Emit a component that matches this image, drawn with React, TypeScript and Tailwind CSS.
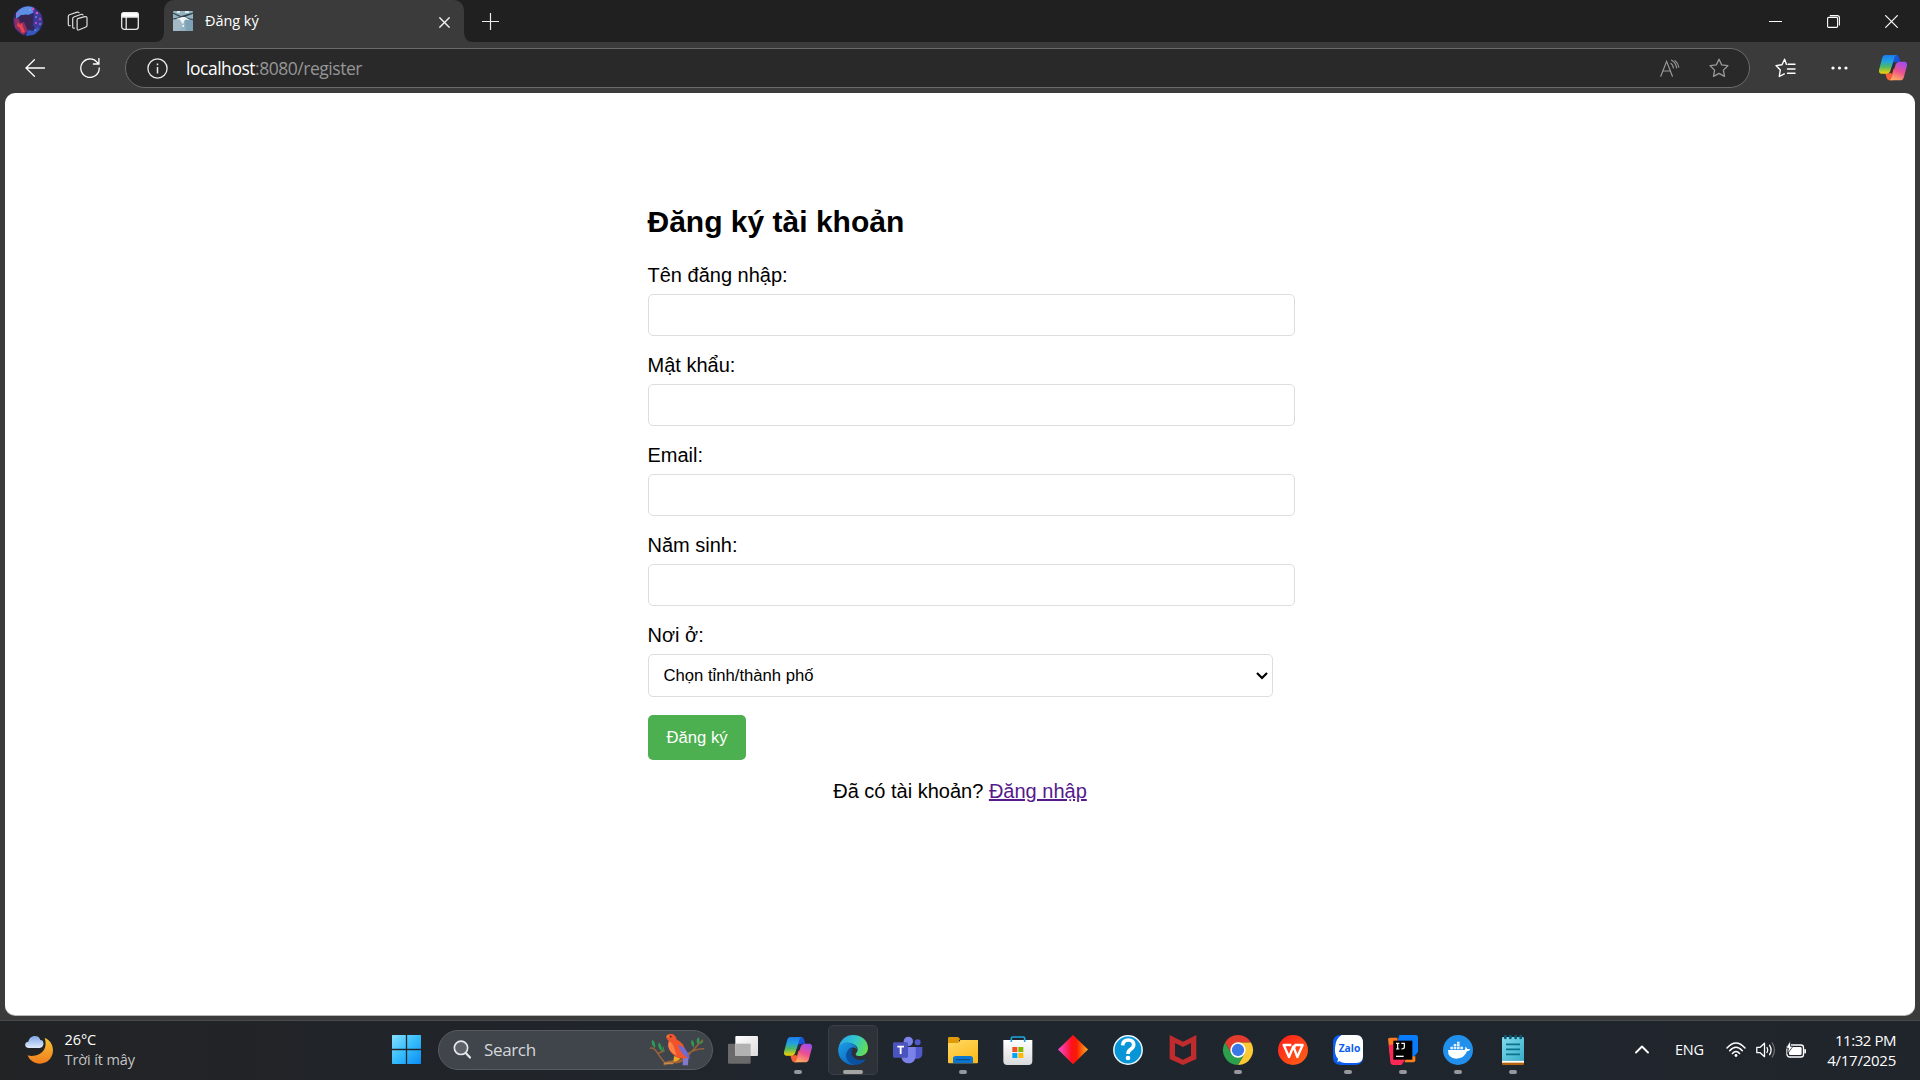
import type { ReactNode } from "react";

const UI = "font-['Open_Sans','Noto_Sans',sans-serif]";

function Ribbon({ id }: { id: string }) {
  return (
    <>
      <defs>
        <linearGradient id={id + "a"} x1="0" y1="0" x2="0" y2="1">
          <stop offset="0" stopColor="#1b7df0" />
          <stop offset="0.35" stopColor="#22a3dc" />
          <stop offset="0.62" stopColor="#4cb86a" />
          <stop offset="1" stopColor="#f6d000" />
        </linearGradient>
        <linearGradient id={id + "b"} x1="0.7" y1="0" x2="0.3" y2="1">
          <stop offset="0" stopColor="#a04cf0" />
          <stop offset="0.5" stopColor="#ee5090" />
          <stop offset="1" stopColor="#ffb35c" />
        </linearGradient>
        <linearGradient id={id + "c"} x1="0" y1="0" x2="1" y2="1">
          <stop offset="0" stopColor="#0f5fd8" />
          <stop offset="1" stopColor="#2445d8" />
        </linearGradient>
      </defs>
      <path d="M44 6h10c6 0 8 4 10 10l3 10h-8c-8 0-11 4-13 11l-10 8z" fill={`url(#${id}c)`} />
      <path d="M45 82H35c-6 0-8-4-10-10l-3-11h8c8 0 11-4 13-11l10-6z" fill="#f4603a" />
      <path d="M24 6h34c-6 1-8 5-10 11L38 50c-2 8-6 12-14 12H13C4 62 1 56 4 47l8-30C14 9 17 6 24 6z" fill={`url(#${id}a)`} />
      <path d="M66 82H32c6-1 8-5 10-11l10-33c2-8 6-12 14-12h11c9 0 12 6 9 15l-8 30c-2 8-5 11-12 11z" fill={`url(#${id}b)`} />
      <path d="M46 28h6l-10 34-5-2z" fill="#2b2c33" />
    </>
  );
}

function TaskIcon({ children, running, active }: { children: ReactNode; running?: boolean; active?: boolean }) {
  return (
    <div className={active ? "flex h-[50px] w-[50px] flex-col items-center rounded-[5px] border border-[#3a3f46] bg-[#2d3239]" : "flex h-[50px] w-[50px] flex-col items-center border border-transparent"}>
      <svg viewBox="0 0 90 90" className="mt-[9px] h-[30px] w-[30px] shrink-0 overflow-visible">{children}</svg>
      {running && <span className={active ? "mt-[5px] h-1 w-5 rounded-full bg-[#a5a5a3]" : "mt-[5px] h-1 w-2 rounded-full bg-[#96989b]"} />}
    </div>
  );
}

function TabStrip() {
  return (
    <div className="flex h-[42px] items-center bg-[#202020]">
      <svg viewBox="0 0 30 30" className="ml-[13px] h-[30px] w-[30px]">
        <defs>
          <clipPath id="avatar"><circle cx="15" cy="15" r="15" /></clipPath>
        </defs>
        <g clipPath="url(#avatar)">
          <rect width="30" height="30" fill="#2b2a6c" />
          <path d="M3 7Q10-2 20 1l2 5-7 3-7 0-5 4z" fill="#5b8fe6" />
          <path d="M19 1l9 7 2 10-6 7-4-6 1-9z" fill="#43399c" />
          <path d="M7 10q8-4 12 2 2 8-3 14-10-2-9-16z" fill="#382650" />
          <path d="M1 12l5 1 1 4 4-1 2 5 2 4-5 4-8-7z" fill="#8d2f66" />
          <path d="M5 16l2 3 2-2 1 4 2 5-3 1-2-5-3-2z" fill="#ec4350" />
          <path d="M15 24l6 1 3-4 3 2-6 6-8 1z" fill="#3558bd" />
          <g fill="#d255b8"><circle cx="20" cy="3" r="1.500" /><circle cx="24" cy="7" r="1.300" /><circle cx="27" cy="13" r="1" /><circle cx="5" cy="8" r="1" /><circle cx="23" cy="17" r="1" /></g>
          <g fill="#8fb6f5"><circle cx="17" cy="4" r=".8" /><circle cx="27" cy="18" r=".8" /><circle cx="22" cy="24" r=".8" /><circle cx="23" cy="11" r=".8" /></g>
        </g>
      </svg>
      <svg viewBox="0 0 21 20" className="ml-6 h-5 w-[21px]" fill="none" stroke="#dedede" strokeWidth="1.2" strokeLinejoin="round" strokeLinecap="round">
        <path d="M10.600 7.600l7.200-2q2.200-.4 2.200 1.600v7.300q0 1.100-1.100 1.500l-6.600 2.800q-2.200.7-2.200-1.200V9q0-1 .5-1.400z" />
        <path d="M7.400 17.200q-1.700.4-1.700-1.400V7.700q0-1.300 1.100-1.700l7.600-2.700q1.200-.2 1.600.7" />
        <path d="M3.200 14.700q-1.900.4-1.900-1.400V5.400q0-1.300 1.100-1.700l7.800-2.600q1.300-.3 1.800.6" />
      </svg>
      <svg viewBox="0 0 18 18" className="ml-[33px] h-[18px] w-[18px]" fill="none" stroke="#e8e8e8" strokeWidth="1.3">
        <rect x=".7" y=".7" width="16.600" height="16.600" rx="2.600" />
        <path d="M.7 5V3Q.7.7 3 .7h12q2.300 0 2.300 2.300v2z" fill="#fff" />
        <path d="M5.200 5v12" />
      </svg>
      <div className="flex h-[42px] w-[25px] items-end justify-end">
        <svg viewBox="0 0 10 10" className="h-[10px] w-[10px]"><path d="M10 0v10H0Q10 10 10 0z" fill="#3b3b3b" /></svg>
      </div>
      <div className="flex h-[42px] w-[300px] items-center rounded-t-[10px] bg-[#3b3b3b]">
        <svg viewBox="0 0 20 20" className="ml-[9px] h-5 w-5">
          <rect width="20" height="20" rx="1" fill="#93b3c3" />
          <path d="M0 8l8-2 2 8-4 6H0z" fill="#a3bac6" />
          <path d="M12 9l8-2v13h-7z" fill="#7fa3b6" />
          <path d="M0 1.500l8 3.500 12-3.500v1.200L12 6l8 2.200v1L11 7 0 8.500v-1L7 6 0 2.800z" fill="#33454e" />
          <path d="M3 8l6-2 3 0 5 3-5-.5-1 2-1 3-2-3-1-2zM9.500 14h1.500v2H9.500z" fill="#eef5f8" />
          <path d="M4 0h3v2H4zM12 0h4v2h-4z" fill="#dbe7ec" />
        </svg>
        <span className="ml-3 -mt-[1px] text-[14.500px] leading-5 tracking-[-0.050px] text-white">Đăng ký</span>
        <svg viewBox="0 0 11 11" className="ml-auto mr-[14px] mt-[2px] h-[11px] w-[11px]" stroke="#f2f2f2" strokeWidth="1.4"><path d="M.4.4l10.200 10.200M10.600.4L.4 10.600" /></svg>
      </div>
      <div className="flex h-[42px] w-[10px] items-end">
        <svg viewBox="0 0 10 10" className="h-[10px] w-[10px]"><path d="M0 0v10h10Q0 10 0 0z" fill="#3b3b3b" /></svg>
      </div>
      <svg viewBox="0 0 17 17" className="ml-2 h-[17px] w-[17px]" stroke="#ececec" strokeWidth="1.2"><path d="M8.500 0v17M0 8.500h17" /></svg>
      <div className="ml-auto mr-[22px] flex items-center">
        <span className="h-px w-[13px] bg-white" />
        <svg viewBox="0 0 13 13" className="ml-[45px] h-[13px] w-[13px]" fill="none" stroke="#fff" strokeWidth="1.1">
          <rect x=".6" y="2.400" width="10" height="10" rx="1.200" />
          <path d="M2.800.6h7.400q2.200 0 2.200 2.200v7.600" />
        </svg>
        <svg viewBox="0 0 13 13" className="ml-[45px] h-[13px] w-[13px]" stroke="#fff" strokeWidth="1.2"><path d="M.3.3l12.400 12.400M12.700.3L.3 12.700" /></svg>
      </div>
    </div>
  );
}

const STAR = "M10 1.2l2.7 5.7 6.2.8-4.5 4.4 1.1 6.3L10 15.4l-5.5 3 1.1-6.3L1.1 7.7l6.2-.8z";

function Toolbar() {
  return (
    <div className="flex h-[51px] items-center bg-[#3b3b3b]">
      <svg viewBox="0 0 20 18" className="ml-[25px] h-[18px] w-5" fill="none" stroke="#fff" strokeWidth="1.3" strokeLinecap="round"><path d="M9.400.8L1 9l8.400 8.200M1 9h18.500" /></svg>
      <svg viewBox="0 0 20 20" className="ml-[35px] h-5 w-5" fill="none" stroke="#fff" strokeWidth="1.3" strokeLinecap="round"><path d="M19.200 10A9.200 9.200 0 1 1 17 4.200L18.800 6M18.900.6V6H13.400" /></svg>
      <div className="ml-[25px] mt-[1px] flex h-10 w-[1625px] items-center rounded-full border border-[#6b6b6b] bg-[#292929]">
        <svg viewBox="0 0 21 21" className="ml-[21px] h-[21px] w-[21px]" fill="none" stroke="#ececec" strokeWidth="1.3"><circle cx="10.500" cy="10.500" r="9.600" /><path d="M10.500 9v6.500M10.500 5.500v1.800" strokeWidth="1.5" /></svg>
        <p className="ml-[18px] -mt-[1px] text-[17.500px] leading-6 tracking-[-0.470px] text-[#969696]"><span className="text-white">localhost</span>:8080/register</p>
        <svg viewBox="0 0 20 18" className="ml-auto h-[18px] w-5" fill="none" stroke="#999" strokeWidth="1.2" strokeLinecap="round">
          <path d="M.8 17.200L6.600 2.400l5.800 14.800M2.800 12h7.600M11 4.400q2 1.400 2.400 4.400M11.600 1.200q4.200 2.300 5 7.600M15 1.600q3 2.400 3.800 6.600" />
        </svg>
        <svg viewBox="0 0 20 20" className="ml-[29px] mr-[20px] h-5 w-5" fill="none" stroke="#999" strokeWidth="1.3" strokeLinejoin="round"><path d={STAR} /></svg>
      </div>
      <svg viewBox="0 0 21 20" className="ml-[25px] h-5 w-[21px]" fill="none" stroke="#fff" strokeWidth="1.4" strokeLinejoin="round" strokeLinecap="round"><path d="M11.400 6.300L9.600 1.200 7 6.700l-6 .9 4.300 4.300-1 6.600 5-2.600M13 6.300h7M12.500 11h7.500M12.500 15.200h7.500" /></svg>
      <svg viewBox="0 0 17 4" className="ml-[35px] h-1 w-[17px]" fill="#fff"><circle cx="2" cy="2" r="1.600" /><circle cx="8.500" cy="2" r="1.600" /><circle cx="15" cy="2" r="1.600" /></svg>
      <svg viewBox="0 0 90 90" className="ml-[30px] h-[30px] w-[30px]"><Ribbon id="top" /></svg>
    </div>
  );
}

function RegisterPage() {
  return (
    <main className="mx-[5px] h-[922px] rounded-[10px] bg-white pt-[111px] font-['Liberation_Sans',Arial,sans-serif] text-xl leading-[23px] text-black shadow-[0_1px_0_#b8b8b8]">
      <form className="ml-[642.500px] w-[625px]">
        <h2 className="h-[36px] text-[30px] font-bold leading-[35px]">Đăng ký tài khoản</h2>
        <div className="ml-[0.500px] mt-[24px] flex w-[647px] flex-col gap-[18px]">
          {["Tên đăng nhập:", "Mật khẩu:", "Email:", "Năm sinh:"].map((label) => (
            <div key={label} className="flex h-[72px] flex-col justify-between">
              <label className="-ml-[0.500px] block">{label}</label>
              <input className="block h-[42px] w-[647px] rounded-[5px] border border-[#ddd] px-4" />
            </div>
          ))}
          <div className="flex h-[73px] flex-col justify-between">
            <label className="-ml-[0.500px] block">Nơi ở:</label>
            <div className="relative h-[43px] w-[625px]">
              <select className="h-[43px] w-[625px] appearance-none rounded-[5px] border border-[#ddd] bg-white px-[14.500px] text-[16.670px]">
                <option>Chọn tỉnh/thành phố</option>
              </select>
              <svg viewBox="0 0 12 8" className="absolute right-[5px] top-[18px] h-2 w-3" fill="none" stroke="#000" strokeWidth="2.2"><path d="M1 1l5 5 5-5" /></svg>
            </div>
          </div>
        </div>
        <button type="button" className="ml-[0.500px] mt-[18px] block h-[45px] w-[98px] rounded-[5px] bg-[#4caf50] text-[16.670px] text-white">Đăng ký</button>
        <p className="mt-[20px] text-center">Đã có tài khoản? <a className="text-[#551a8b] underline">Đăng nhập</a></p>
      </form>
    </main>
  );
}

function Weather() {
  return (
    <div className="flex w-[391px] items-center">
      <svg viewBox="0 0 84 84" className="ml-[25px] h-7 w-7">
        <defs>
          <linearGradient id="moon" x1="0" y1="0" x2="0" y2="1"><stop offset="0" stopColor="#f6c336" /><stop offset="1" stopColor="#f07c1c" /></linearGradient>
          <linearGradient id="cloud" x1="0" y1="0" x2="0" y2="1"><stop offset="0" stopColor="#7fa6e8" /><stop offset="1" stopColor="#dfe9fb" /></linearGradient>
        </defs>
        <path d="M59 6c16 6 25 20 25 37 0 23-17 40-39 40C28 83 13 73 8 58c8 3 22 3 34-3 18-9 24-28 17-49z" fill="url(#moon)" />
        <path d="M12 36C-3 36-3 18 10 17 13 4 22 0 30 0c9 0 14 5 16 12 14 0 12 24-2 24z" fill="url(#cloud)" />
      </svg>
      <div className="ml-[11.500px] text-[14.500px] leading-5 tracking-[-0.100px]">
        <p className="text-white">26°C</p>
        <p className="text-[#c3c5c8]">Trời ít mây</p>
      </div>
    </div>
  );
}

function SearchBox() {
  return (
    <div className="ml-[17px] flex h-10 w-[275px] items-center rounded-full border border-[#575c62] bg-[#40454c]">
      <svg viewBox="0 0 54 56" className="ml-[14px] h-[19px] w-[18px]" fill="#5d6268" stroke="#e6e7e8" strokeWidth="5" strokeLinecap="round"><circle cx="24" cy="23" r="20" /><path d="M39 39l12 13" strokeWidth="6.5" /></svg>
      <span className="ml-[13px] text-[17px] tracking-[-0.350px] text-[#d5d7d9]">Search</span>
      <svg viewBox="0 0 170 100" className="ml-auto mr-[7px] h-[33px] w-[56px]">
        <g fill="none" stroke="#9a6238" strokeLinecap="round">
          <path d="M48 94Q62 84 84 88 106 86 122 62" strokeWidth="9" />
          <path d="M48 90Q34 74 24 58T4 46M116 66Q134 48 166 48M132 54Q144 40 162 22M26 62l20-8" strokeWidth="4.500" />
          <path d="M48 92h24" stroke="#c58a4c" strokeWidth="5" />
        </g>
        <g fill="#2f9a51">
          <path d="M10 20q12 10 8 26-14-10-8-26zM30 28q12 12 8 28-14-14-8-28zM44 40q4 12-4 18 0-12 4-18zM130 20q10 10 6 24-12-10-6-24zM150 12q8 12-2 22-8-10 2-22zM166 24q-4 10-14 8 4-8 14-8z" />
        </g>
        <path d="M94 40l24 28 8 12-18-8-20-22z" fill="#4f55b8" />
        <path d="M104 72l16 4-2 22H102z" fill="#8179cd" />
        <path d="M52 12Q60-2 74 4q8 6 10 16 20 10 26 30l8 24Q92 84 70 62 54 46 60 24q-6-4-8-12z" fill="#f0542d" />
        <path d="M60 26q10 2 16 18l8 24Q52 54 60 26z" fill="#ff8044" />
        <path d="M88 36q26 4 36 40-24-4-36-40z" fill="#7469ce" />
        <path d="M52 12q2-6 7-8l2 9z" fill="#d88732" /><circle cx="66" cy="11" r="2.500" fill="#451e18" />
        <path d="M76 70l20 8-10 6-12 4z" fill="#f6a623" />
      </svg>
    </div>
  );
}

function Apps() {
  return (
    <div className="ml-[5px] flex gap-[5px]">
      <TaskIcon>
        <defs>
          <linearGradient id="tv" x1="0" y1="0" x2="1" y2="1"><stop offset="0" stopColor="#fff" /><stop offset="1" stopColor="#dcdcdc" /></linearGradient>
        </defs>
        <rect x="0" y="26" width="68" height="60" rx="3" fill="#6a6a6a" />
        <rect x="22" y="3" width="68" height="60" rx="3" fill="url(#tv)" />
        <path d="M22 26h46v37H22z" fill="#b2b2b2" />
      </TaskIcon>
      <TaskIcon running><Ribbon id="task" /></TaskIcon>
      <TaskIcon running active>
        <defs>
          <linearGradient id="e1" x1="0" y1="0.3" x2="1" y2="0.6"><stop offset="0" stopColor="#2aa5e8" /><stop offset="0.5" stopColor="#31c6cf" /><stop offset="1" stopColor="#66e04e" /></linearGradient>
          <linearGradient id="e2" x1="0" y1="0" x2="0.8" y2="1"><stop offset="0" stopColor="#1ba0e6" /><stop offset="1" stopColor="#0b63c0" /></linearGradient>
        </defs>
        <path d="M2 38C6 14 24 0 45 0c27 0 45 18 45 38 0 16-12 25-25 25-12 0-14-5-10-9 6-6 5-17-3-23C38 20 14 20 2 38z" fill="url(#e1)" />
        <path d="M1 38C8 24 32 18 48 29c5 3 8 8 9 14-5-7-17-8-24 0-16 20-2 44 22 46C24 94-4 70 1 38z" fill="url(#e2)" />
        <path d="M34 41c-16 14-13 42 17 48 14 1 27-7 33-18-12 7-27 5-35-2-10-8-11-18-5-27-4-3-7-3-10-1z" fill="#0c50a0" />
      </TaskIcon>
      <TaskIcon>
        <circle cx="74" cy="22" r="9" fill="#5059c9" />
        <circle cx="46" cy="19" r="14" fill="#7b83eb" />
        <path d="M66 36h22v20c0 10-8 15-16 15H60z" fill="#5059c9" />
        <path d="M28 36h40v26c0 15-10 23-22 23-10 0-17-6-20-14z" fill="#7b83eb" />
        <rect x="0" y="22" width="45" height="46" rx="4" fill="#4b53bc" />
        <path d="M13 35h20M23 35v22" stroke="#fff" strokeWidth="5.5" />
      </TaskIcon>
      <TaskIcon running>
        <defs><linearGradient id="fo" x1="0" y1="0" x2="0.6" y2="1"><stop offset="0" stopColor="#ffda66" /><stop offset="1" stopColor="#fdbb1e" /></linearGradient></defs>
        <path d="M0 10q0-4 4-4h24q4 0 6 4l3 4h-4v12H0z" fill="#e09a08" />
        <path d="M0 24h28q4 0 7-5l2-4h53v67q0 3-3 3H3q-3 0-3-3z" fill="url(#fo)" />
        <path d="M15 85V71q0-8 8-8h44q8 0 8 8v14z" fill="#0d76d0" />
        <path d="M26 74h38" stroke="#07508f" strokeWidth="4" strokeLinecap="round" />
      </TaskIcon>
      <TaskIcon>
        <defs><linearGradient id="st" x1="0" y1="0" x2="0" y2="1"><stop offset="0" stopColor="#fff" /><stop offset="1" stopColor="#d9dadb" /></linearGradient></defs>
        <path d="M1 15h87v63q0 12-12 12H13Q1 90 1 78z" fill="url(#st)" />
        <path d="M25 21V10q0-4 4-4h32q4 0 4 4v11" fill="none" stroke="#20a5e0" strokeWidth="5" />
        <path d="M28 36h15v15H28z" fill="#f25022" /><path d="M46 36h15v15H46z" fill="#7fba00" />
        <path d="M28 54h15v15H28z" fill="#00a4ef" /><path d="M46 54h15v15H46z" fill="#ffb900" />
      </TaskIcon>
      <TaskIcon>
        <defs><linearGradient id="di"><stop offset="0" stopColor="#f050d8" /><stop offset="0.45" stopColor="#ff1020" /><stop offset="0.62" stopColor="#f81c00" /><stop offset="1" stopColor="#ffb020" /></linearGradient></defs>
        <path d="M45 0l45 43.500-45 44L0 43.500z" fill="url(#di)" />
      </TaskIcon>
      <TaskIcon>
        <circle cx="45" cy="45" r="42.500" fill="#0696d7" stroke="#eef6fa" strokeWidth="4.500" />
        <path d="M29 31q1-16 17-16t16 14q0 8-9 14-8 5-8 14" fill="none" stroke="#fff" strokeWidth="11" /><circle cx="45" cy="69" r="7" fill="#fff" />
      </TaskIcon>
      <TaskIcon>
        <path d="M5 0l40 20L85 0v72L45 90 5 72zM21 24v38l24 12 24-12V24L45 36z" fill="#c02b2d" fillRule="evenodd" />
      </TaskIcon>
      <TaskIcon running>
        <path d="M6 22.500A45 45 0 0 1 84 22.500H45L25.500 56.300z" fill="#e33b2e" />
        <path d="M84 22.500A45 45 0 0 1 45 90L64.500 56.300 45 22.500z" fill="#fcc934" />
        <path d="M45 90A45 45 0 0 1 6 22.500L25.500 56.300 64.500 56.300z" fill="#2da04c" />
        <circle cx="45" cy="45" r="23" fill="#fff" /><circle cx="45" cy="45" r="18.500" fill="#3b78e7" />
      </TaskIcon>
      <TaskIcon>
        <defs><linearGradient id="wp" x1="0" y1="0" x2="1" y2="1"><stop offset="0" stopColor="#ff1c1c" /><stop offset="1" stopColor="#ff6414" /></linearGradient></defs>
        <circle cx="45" cy="45" r="45" fill="url(#wp)" />
        <path d="M40 30H17l16 36 13-32 12 32 16-36H52l-5 12" fill="none" stroke="#fff" strokeWidth="7" strokeLinejoin="round" />
      </TaskIcon>
      <TaskIcon running>
        <path d="M22 0h47q21 0 21 24v42q0 24-24 24H24Q0 90 0 66V24Q0 0 22 0z" fill="#0a5df0" />
        <path d="M26 0h43q21 0 21 24v40q0 20-20 20H36q-10 0-16-5-4 2-8 1 4-4 3-9Q4 60 6 38 8 10 26 0z" fill="#fff" />
        <text x="17" y="51" fontFamily="Open Sans, sans-serif" fontWeight="700" fontSize="29" textLength="65" lengthAdjust="spacingAndGlyphs" fill="#0a5df0">Zalo</text>
      </TaskIcon>
      <TaskIcon running>
        <path d="M34 0h49q7 0 7 7v44l-26 29-36-60z" fill="#087cfa" />
        <path d="M0 13q0-5 6-5h22l6 60-26 6z" fill="#fd7a20" />
        <path d="M2 30l30-4 24 42-16 22H16q-8 0-9-9z" fill="#fe2857" />
        <path d="M56 64h26v12q0 6-6 6H50z" fill="#fc801d" />
        <rect x="16" y="17" width="57" height="57" fill="#000" />
        <path d="M24 25h10M29 25v17M24 42h10M40 25h9v12q0 5-9 5" fill="none" stroke="#fff" strokeWidth="3.600" />
        <path d="M24 64h23" stroke="#fff" strokeWidth="4" />
      </TaskIcon>
      <TaskIcon running>
        <circle cx="45" cy="45" r="45" fill="#2090ec" />
        <path d="M15 45h50q3-4 2-10 5 2 6 7 5-1 9 1-3 6-10 6-8 22-32 22-26 0-25-26z" fill="#fff" />
        <path d="M22 35h8v8h-8zM32 35h8v8h-8zM42 35h8v8h-8zM52 35h8v8h-8zM32 27h8v7h-8zM42 27h8v7h-8zM42 20h8v6h-8z" fill="#e3f1fd" />
      </TaskIcon>
      <TaskIcon running>
        <defs><linearGradient id="no" x1="0" y1="0" x2="1" y2="1"><stop offset="0" stopColor="#83dbef" /><stop offset="1" stopColor="#37aeca" /></linearGradient></defs>
        <path d="M12 78h66v9q0 3-3 3H15q-3 0-3-3z" fill="#b5620f" /><path d="M12 76h66v7H12z" fill="#fff" />
        <path d="M12 10q0-4 4-4h58q4 0 4 4v67H12z" fill="url(#no)" />
        <path d="M24 28h42M24 43h42M24 58h42" stroke="#0c728c" strokeWidth="5" />
        <path d="M22 3v6M37 3v6M53 3v6M68 3v6" stroke="#0d5870" strokeWidth="8" strokeLinecap="round" />
      </TaskIcon>
    </div>
  );
}

function Tray() {
  return (
    <div className="ml-auto mr-6 flex items-center text-white">
      <svg viewBox="0 0 14 9" className="h-[9px] w-[14px]" fill="none" stroke="#fff" strokeWidth="1.900" strokeLinecap="round" strokeLinejoin="round"><path d="M1 7.500l6-6 6 6" /></svg>
      <span className="ml-[26px] mt-[1px] w-[30px] whitespace-nowrap text-[14.500px] tracking-[-0.250px]">ENG</span>
      <svg viewBox="0 0 20 16" className="ml-[21px] h-4 w-5" fill="none" stroke="#fff" strokeWidth="1.500" strokeLinecap="round">
        <path d="M1 6q9-10 18 0M3.700 8.800q6.300-7 12.600 0M6.400 11.500q3.600-4 7.200 0" /><circle cx="10" cy="13.500" r="1.400" fill="#fff" stroke="none" />
      </svg>
      <svg viewBox="0 0 20 18" className="ml-[10px] h-[18px] w-5" fill="none" stroke="#fff" strokeWidth="1.300" strokeLinecap="round" strokeLinejoin="round">
        <path d="M.8 6.300h3.400l4.300-4v13.400l-4.300-4H.8zM11 6.500q1.600 2.500 0 5M13.600 4.300q3 4.700 0 9.400" /><path d="M16.200 2q4.500 7 0 14" stroke="#6a6f75" />
      </svg>
      <svg viewBox="0 0 20 17" className="ml-[10px] h-[17px] w-5 overflow-visible">
        <rect x="1" y="4" width="16.500" height="12" rx="2.600" fill="none" stroke="#fff" strokeWidth="1.300" />
        <rect x="3" y="6" width="12.600" height="8" rx="1.200" fill="#fff" /><path d="M18.300 8h.7q1 0 1 1v2.500q0 1-1 1h-.7z" fill="#fff" />
        <path d="M4.500-.5L-.2 7.200h2.600L1.600 12.500 7 5.300H4.500z" fill="#fff" stroke="#20262d" strokeWidth=".8" />
      </svg>
      <div className="ml-[18px] w-[72px] whitespace-nowrap text-right text-[15px] leading-5 tracking-[-0.250px]">
        <p className="tracking-[-0.450px]">11:32 PM</p>
        <p>4/17/2025</p>
      </div>
    </div>
  );
}

export default function App() {
  return (
    <div className={`${UI} flex h-[1080px] w-[1920px] flex-col overflow-hidden bg-[#3b3b3b]`}>
      <TabStrip />
      <Toolbar />
      <RegisterPage />
      <footer className="mt-[5px] flex h-[60px] items-center border-t border-[#484a4b] bg-linear-to-r from-[#222325] via-[#1f262e] to-[#20252b] pb-[1.500px]">
        <Weather />
        <svg viewBox="0 0 88 88" className="ml-[1px] h-[29px] w-[29px]">
          <defs><linearGradient id="win" x1="0" y1="0" x2="88" y2="88" gradientUnits="userSpaceOnUse"><stop offset="0" stopColor="#86e0ff" /><stop offset="0.5" stopColor="#35bcfb" /><stop offset="1" stopColor="#0a8df5" /></linearGradient></defs>
          <path d="M2 0h40v42H0V2q0-2 2-2zM46 0h40q2 0 2 2v40H46zM0 46h42v42H2q-2 0-2-2zM46 46h42v40q0 2-2 2H46z" fill="url(#win)" />
        </svg>
        <SearchBox />
        <Apps />
        <Tray />
      </footer>
    </div>
  );
}
